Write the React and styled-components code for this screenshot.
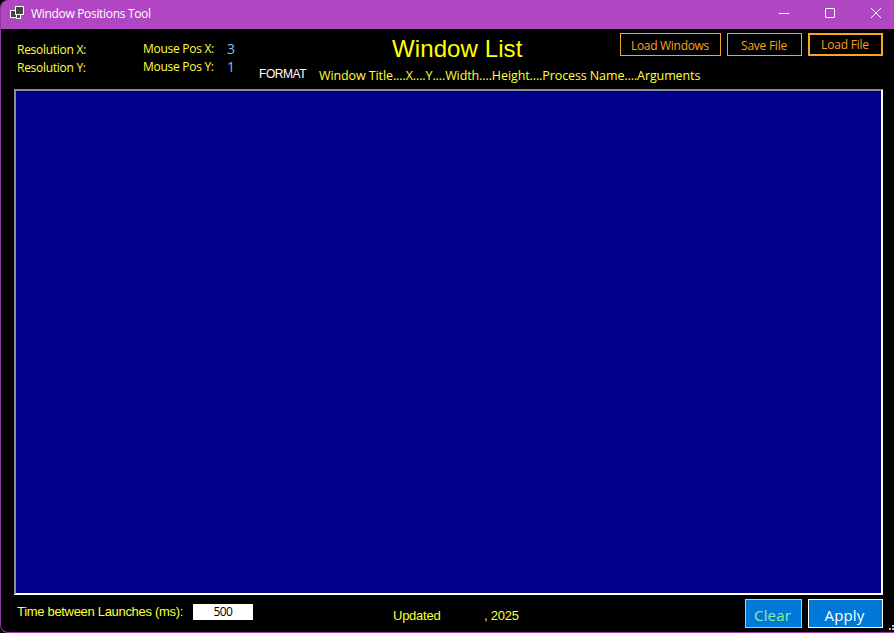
import React from "react";
import styled, { createGlobalStyle } from "styled-components";

const Global = createGlobalStyle`
  * { box-sizing: border-box; }
  html, body { margin: 0; background: #000; }
  body { overflow: hidden; }
`;

const ui = `"Open Sans", "Noto Sans", sans-serif`;
const classic = `"Liberation Sans", Arial, sans-serif`;

const Window = styled.div`
  width: 894px;
  height: 633px;
  display: flex;
  flex-direction: column;
  background: #000;
  border-left: 1px solid #8c3a9a;
  border-bottom: 1px solid #a03cae;
  border-radius: 8px 0 0 8px;
  overflow: hidden;
  font-family: ${ui};
`;

const TitleBar = styled.header`
  height: 29px;
  flex: none;
  display: flex;
  align-items: center;
  background: #b146c2;
  padding: 0 12px 2px 8px;
  color: #fff;
`;

const AppTitle = styled.span`
  flex: 1;
  margin-left: 6px;
  font-size: 12px;
  line-height: 16px;
  letter-spacing: -0.32px;
`;

const Controls = styled.div`
  display: flex;
  gap: 34px;
  margin-top: -2px;
`;

const TopArea = styled.section`
  height: 60px;
  flex: none;
  display: grid;
  grid-template-columns: 126px 84px 31px 1fr;
  padding: 0 11px 0 16px;
`;

const Labels = styled.div`
  padding-top: ${(p) => p.$top}px;
`;

const Line = styled.div`
  height: 18px;
  line-height: 18px;
  white-space: nowrap;
  font-size: ${(p) => p.$size || 12}px;
  letter-spacing: ${(p) => p.$track || 0}px;
  color: ${(p) => p.$color || "#ffff3c"};
`;

const Main = styled.div`
  display: flex;
  flex-direction: column;
`;

const HeadRow = styled.div`
  height: 37px;
  display: flex;
  padding: 4px 0 0 134px;
`;

const Heading = styled.h1`
  flex: 1;
  margin: 0;
  font: 400 24px/32px ${classic};
  letter-spacing: ${(p) => p.$track}px;
  color: #ffff00;
`;

const Buttons = styled.div`
  display: flex;
  gap: 6px;
`;

const FileButton = styled.button`
  width: ${(p) => p.$width}px;
  height: 23px;
  padding: ${(p) => (p.$default ? "1px 1px 0 0" : "2px 1px 0 0")};
  background: #000;
  border: ${(p) => (p.$default ? 2 : 1)}px solid #f5a623;
  color: #faa21e;
  font: 400 12px/16px ${ui};
  letter-spacing: ${(p) => p.$track || 0}px;
  white-space: nowrap;
`;

const FormatRow = styled.div`
  display: flex;
  height: 20px;
  padding-left: 1px;
`;

const FormatTag = styled.span`
  width: 60px;
  font: 400 12px/16px ${classic};
  letter-spacing: ${(p) => p.$track}px;
  color: #fff;
`;

const FormatText = styled.span`
  font: 400 12.5px/20px ${ui};
  letter-spacing: ${(p) => p.$track}px;
  color: #ffff3c;
  white-space: nowrap;
`;

const ListPanel = styled.main`
  height: 506px;
  flex: none;
  margin: 0 11px 0 13px;
  background: #00008b;
  border: 2px solid;
  border-color: #8c8c98 #fff #fff #8c8c98;
`;

const Footer = styled.footer`
  flex: 1;
  display: flex;
  padding: 4px 0 0 16px;
  font: 400 13px/18px ${classic};
  color: #ffff3c;
`;

const DelayLabel = styled.label`
  width: 176px;
  padding-top: 4px;
  white-space: nowrap;
  letter-spacing: ${(p) => p.$track}px;
`;

const DelayInput = styled.input`
  width: 60px;
  height: 16px;
  margin: 5px 140px 0 0;
  padding: 0;
  border: 0;
  background: #fff;
  color: #000;
  text-align: center;
  font: 400 12px/16px ${ui};
  letter-spacing: -0.6px;
`;

const Updated = styled.div`
  flex: 1;
  display: flex;
  padding-top: 8px;
  letter-spacing: -0.25px;
`;

const UpdatedWord = styled.span`
  width: 91px;
`;

const Action = styled.button`
  width: ${(p) => p.$width}px;
  height: 29px;
  margin-right: 6px;
  padding: 3px 2px 0 0;
  border: 1px solid ${(p) => p.$border};
  background: #0078d7;
  color: ${(p) => p.$color};
  font: 400 15px/20px ${ui};
  letter-spacing: ${(p) => p.$track || 0}px;
`;

const Grip = styled.svg`
  align-self: flex-end;
  flex: none;
`;

export default function App() {
  return (
    <>
      <Global />
      <Window>
        <TitleBar>
          <svg width="16" height="16" viewBox="0 0 16 16" shapeRendering="crispEdges">
            <rect x="1.5" y="4.5" width="7" height="7" fill="#444" stroke="#fff" />
            <rect x="6.5" y="0.5" width="8" height="8" fill="#444" stroke="#fff" />
            <path d="M7.5 9v3.5h4V9" fill="#444" stroke="#fff" />
          </svg>
          <AppTitle>Window Positions Tool</AppTitle>
          <Controls>
            <svg width="12" height="12" viewBox="0 0 12 12"><path d="M1 6.5h10" stroke="#fff" /></svg>
            <svg width="12" height="12" viewBox="0 0 12 12"><rect x="1.5" y="1.5" width="9" height="9" rx=".5" fill="none" stroke="#fff" /></svg>
            <svg width="12" height="12" viewBox="0 0 12 12"><path d="M1 1l10 10M11 1L1 11" stroke="#fff" /></svg>
          </Controls>
        </TitleBar>
        <TopArea>
          <Labels $top={12}>
            <Line $track={-0.28}>Resolution X:</Line>
            <Line $track={-0.28}>Resolution Y:</Line>
          </Labels>
          <Labels $top={11}>
            <Line $track={-0.28}>Mouse Pos X:</Line>
            <Line $track={-0.28}>Mouse Pos Y:</Line>
          </Labels>
          <Labels $top={11}>
            <Line $size={14} $color="#7cc0f0">3</Line>
            <Line $size={14} $color="#7cc0f0">1</Line>
          </Labels>
          <Main>
            <HeadRow>
              <Heading $track={0.1}>Window List</Heading>
              <Buttons>
                <FileButton $width={101} $track={-0.3}>Load Windows</FileButton>
                <FileButton $width={75} $track={-0.25}>Save File</FileButton>
                <FileButton $width={75} $track={-0.2} $default>Load File</FileButton>
              </Buttons>
            </HeadRow>
            <FormatRow>
              <FormatTag $track={-0.45}>FORMAT</FormatTag>
              <FormatText $track={-0.1}>Window Title....X....Y....Width....Height....Process Name....Arguments</FormatText>
            </FormatRow>
          </Main>
        </TopArea>
        <ListPanel />
        <Footer>
          <DelayLabel htmlFor="delay" $track={-0.31}>Time between Launches (ms):</DelayLabel>
          <DelayInput id="delay" defaultValue="500" />
          <Updated>
            <UpdatedWord>Updated</UpdatedWord>
            <span>, 2025</span>
          </Updated>
          <Action $width={57} $border="#90ee90" $color="#8cf09a" $track={0.15}>Clear</Action>
          <Action $width={75} $border="#fff" $color="#fff" $track={0.15}>Apply</Action>
          <Grip width="5" height="8" viewBox="0 0 5 8" fill="#bbb" shapeRendering="crispEdges">
            <path d="M3 1h2v2H3zM0 4h2v2H0zM3 4h2v2H3z" />
          </Grip>
        </Footer>
      </Window>
    </>
  );
}
